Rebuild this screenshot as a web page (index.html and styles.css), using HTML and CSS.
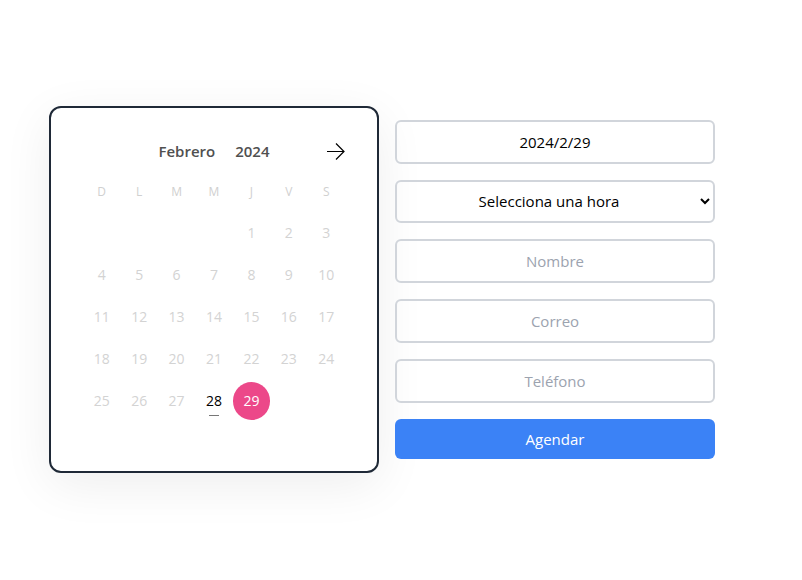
FILE: index.html
```html
<!DOCTYPE html>
<html lang="es">
<head>
<meta charset="utf-8">
<meta name="viewport" content="width=device-width, initial-scale=1">
<title>Agendar</title>
<link rel="stylesheet" href="styles.css">
</head>
<body>
<main class="booking">
  <section class="calendar">
    <header class="calendar-header">
      <button class="title" type="button">Febrero</button>
      <button class="title" type="button">2024</button>
      <button class="next" type="button" aria-label="Mes siguiente">
        <svg width="18" height="18" viewBox="0 0 18 18" fill="none" stroke="#000" stroke-width="1.2"><path d="M0 9.5H17M9 1.5l8 8-8 8"/></svg>
      </button>
    </header>
    <table class="days">
      <thead>
        <tr><th>D</th><th>L</th><th>M</th><th>M</th><th>J</th><th>V</th><th>S</th></tr>
      </thead>
      <tbody>
        <tr><td></td><td></td><td></td><td></td><td><button class="day" disabled>1</button></td><td><button class="day" disabled>2</button></td><td><button class="day" disabled>3</button></td></tr>
        <tr><td><button class="day" disabled>4</button></td><td><button class="day" disabled>5</button></td><td><button class="day" disabled>6</button></td><td><button class="day" disabled>7</button></td><td><button class="day" disabled>8</button></td><td><button class="day" disabled>9</button></td><td><button class="day" disabled>10</button></td></tr>
        <tr><td><button class="day" disabled>11</button></td><td><button class="day" disabled>12</button></td><td><button class="day" disabled>13</button></td><td><button class="day" disabled>14</button></td><td><button class="day" disabled>15</button></td><td><button class="day" disabled>16</button></td><td><button class="day" disabled>17</button></td></tr>
        <tr><td><button class="day" disabled>18</button></td><td><button class="day" disabled>19</button></td><td><button class="day" disabled>20</button></td><td><button class="day" disabled>21</button></td><td><button class="day" disabled>22</button></td><td><button class="day" disabled>23</button></td><td><button class="day" disabled>24</button></td></tr>
        <tr><td><button class="day" disabled>25</button></td><td><button class="day" disabled>26</button></td><td><button class="day" disabled>27</button></td><td><button class="day today">28</button></td><td><button class="day selected">29</button></td><td></td><td></td></tr>
      </tbody>
    </table>
  </section>
  <form class="form">
    <input class="field" type="text" value="2024/2/29" aria-label="Fecha" readonly>
    <select class="field select" aria-label="Hora"><option>Selecciona una hora</option></select>
    <input class="field" type="text" placeholder="Nombre" aria-label="Nombre">
    <input class="field" type="email" placeholder="Correo" aria-label="Correo">
    <input class="field" type="tel" placeholder="Teléfono" aria-label="Teléfono">
    <button class="submit" type="button">Agendar</button>
  </form>
</main>
</body>
</html>
```
FILE: styles.css
```css
* {
  box-sizing: border-box;
}

body {
  margin: 0;
  background: #fff;
  font-family: "Open Sans", "Noto Sans", sans-serif;
  font-size: 15px;
  color: #000;
}

button,
input,
select {
  margin: 0;
  font: inherit;
}

.booking {
  display: flex;
  justify-content: center;
  align-items: center;
  gap: 16px;
  min-height: 100vh;
  padding: 0 38px 2px 0;
}

.calendar {
  width: 330px;
  padding: 24px 32px 49px;
  border: 2px solid #1f2937;
  border-radius: 12px;
  background: #fff;
  box-shadow: 0 12px 50px rgba(0, 0, 0, 0.07);
}

.calendar-header {
  position: relative;
  display: flex;
  justify-content: center;
  align-items: center;
  gap: 20px;
  height: 38px;
}

.title {
  padding: 0;
  border: 0;
  background: none;
  font-size: 15px;
  font-weight: 600;
  color: #505050;
}

.next {
  position: absolute;
  right: 0;
  display: flex;
  padding: 0;
  border: 0;
  background: none;
}

.days {
  width: 100%;
  table-layout: fixed;
  border-collapse: collapse;
}

.days th {
  height: 42px;
  padding: 2px 0 0;
  font-size: 12px;
  font-weight: 400;
  color: #d0d0d0;
}

.days td {
  height: 42px;
  padding: 0;
}

.day {
  position: relative;
  display: block;
  width: 100%;
  height: 38px;
  padding: 0;
  border: 0;
  border-radius: 50%;
  background: none;
  font-size: 14px;
  color: #000;
}

.day:disabled {
  color: #d3d3d3;
}

.today::after {
  content: "";
  position: absolute;
  bottom: 4px;
  left: calc(50% - 5px);
  width: 10px;
  height: 1px;
  background: #777;
}

.selected {
  background: #ec4889;
  color: #fff;
}

.form {
  display: flex;
  flex-direction: column;
  gap: 16px;
  width: 320px;
}

.field {
  width: 100%;
  height: 44px;
  padding: 8px;
  border: 2px solid #d1d5db;
  border-radius: 6px;
  background: transparent;
  color: #000;
  text-align: center;
}

.select {
  height: 43px;
  padding: 8px 0;
}

.field::placeholder {
  color: #9ca3af;
  opacity: 1;
}

.submit {
  height: 40px;
  border: 0;
  border-radius: 6px;
  background: #3b82f6;
  color: #fff;
}
```
